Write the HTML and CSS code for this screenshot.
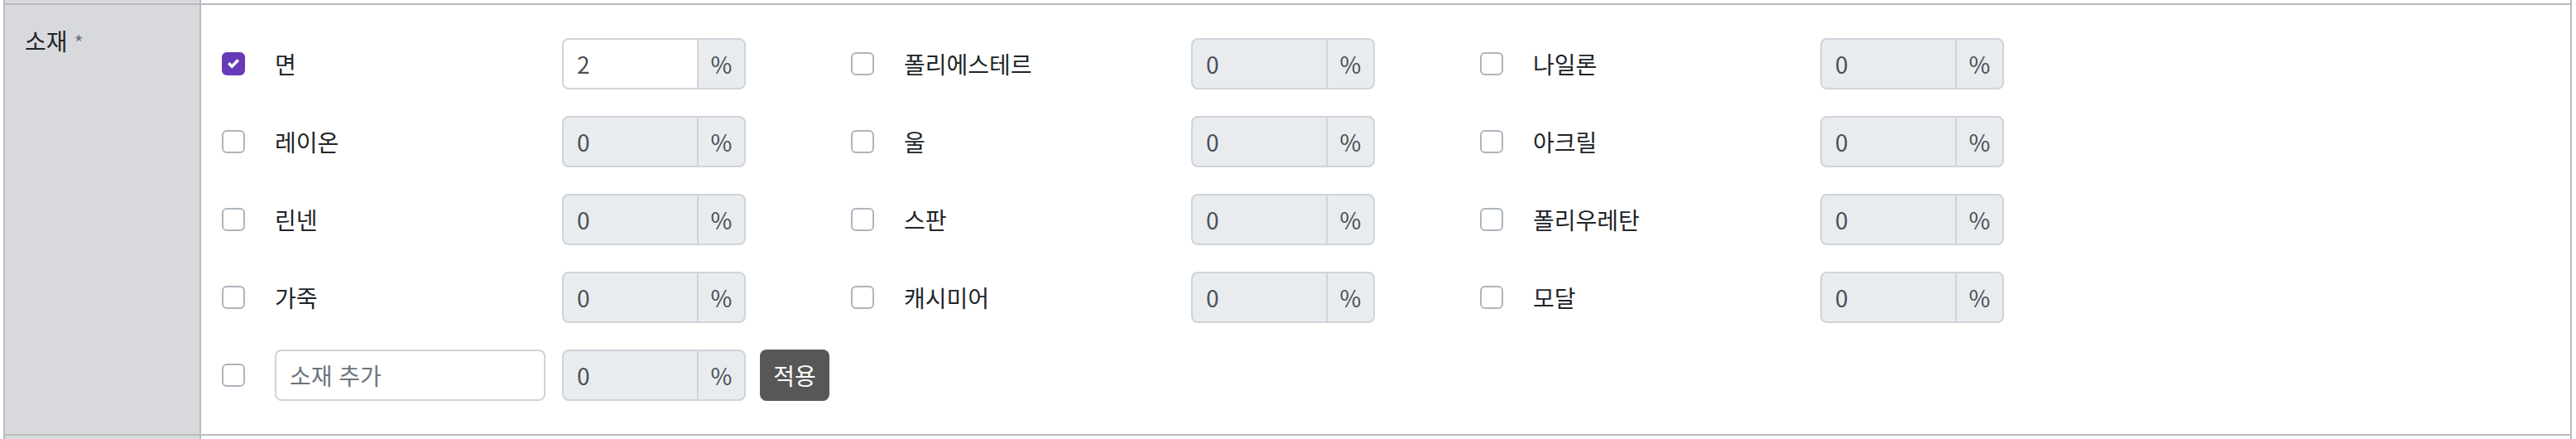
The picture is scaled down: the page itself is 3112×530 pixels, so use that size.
FILE: index.html
```html
<!DOCTYPE html>
<html lang="ko">
<head>
<meta charset="utf-8">
<title>소재</title>
<link rel="stylesheet" href="styles.css">
</head>
<body>
<div class="table">
  <div class="row stub"><div class="th"></div><div class="td"></div></div>
  <div class="row">
    <div class="th">소재 <span class="req">*</span></div>
    <div class="td">
      <div class="materials">
        <div class="item">
          <span class="box on"><svg viewBox="0 0 8 8" width="14" height="14"><path fill="#fff" d="M6.564.75l-3.59 3.612-1.538-1.55L0 4.26 2.974 7.25 8 2.193z"/></svg></span>
          <span class="name">면</span>
          <div class="ig"><input class="num" type="text" value="2"><span class="addon">%</span></div>
        </div>
        <div class="item">
          <span class="box"></span>
          <span class="name">폴리에스테르</span>
          <div class="ig"><input class="num" type="text" value="0" disabled><span class="addon">%</span></div>
        </div>
        <div class="item">
          <span class="box"></span>
          <span class="name">나일론</span>
          <div class="ig"><input class="num" type="text" value="0" disabled><span class="addon">%</span></div>
        </div>
        <div class="item">
          <span class="box"></span>
          <span class="name">레이온</span>
          <div class="ig"><input class="num" type="text" value="0" disabled><span class="addon">%</span></div>
        </div>
        <div class="item">
          <span class="box"></span>
          <span class="name">울</span>
          <div class="ig"><input class="num" type="text" value="0" disabled><span class="addon">%</span></div>
        </div>
        <div class="item">
          <span class="box"></span>
          <span class="name">아크릴</span>
          <div class="ig"><input class="num" type="text" value="0" disabled><span class="addon">%</span></div>
        </div>
        <div class="item">
          <span class="box"></span>
          <span class="name">린넨</span>
          <div class="ig"><input class="num" type="text" value="0" disabled><span class="addon">%</span></div>
        </div>
        <div class="item">
          <span class="box"></span>
          <span class="name">스판</span>
          <div class="ig"><input class="num" type="text" value="0" disabled><span class="addon">%</span></div>
        </div>
        <div class="item">
          <span class="box"></span>
          <span class="name">폴리우레탄</span>
          <div class="ig"><input class="num" type="text" value="0" disabled><span class="addon">%</span></div>
        </div>
        <div class="item">
          <span class="box"></span>
          <span class="name">가죽</span>
          <div class="ig"><input class="num" type="text" value="0" disabled><span class="addon">%</span></div>
        </div>
        <div class="item">
          <span class="box"></span>
          <span class="name">캐시미어</span>
          <div class="ig"><input class="num" type="text" value="0" disabled><span class="addon">%</span></div>
        </div>
        <div class="item">
          <span class="box"></span>
          <span class="name">모달</span>
          <div class="ig"><input class="num" type="text" value="0" disabled><span class="addon">%</span></div>
        </div>
        <div class="item custom">
          <span class="box"></span>
          <span class="name"><input class="text" type="text" placeholder="소재 추가"></span>
          <div class="ig"><input class="num" type="text" value="0" disabled><span class="addon">%</span></div>
          <button class="apply" type="button">적용</button>
        </div>
      </div>
    </div>
  </div>
  <div class="row stub tall"><div class="th"></div><div class="td"></div></div>
</div>
</body>
</html>
```

FILE: styles.css
```css
* { box-sizing: border-box; }

html, body {
  margin: 0;
  padding: 0;
  background: #fff;
}

body {
  font-family: "Noto Sans CJK KR", "Noto Sans", sans-serif;
  font-size: 28px;
  line-height: 1.5;
  color: #212529;
}

.table {
  width: 3103px;
  margin-left: 4px;
  border-left: 2px solid #babbbe;
  border-right: 2px solid #babbbe;
}

.row {
  display: grid;
  grid-template-columns: 237px 1fr;
}

.row + .row {
  border-top: 2px solid #babbbe;
}

.stub { height: 4px; }
.stub.tall { height: 20px; }

.th {
  background: #d8d9dc;
  border-right: 2px solid #babbbe;
  padding: 22px 24px;
  white-space: nowrap;
}

.stub .th { padding: 0; }

.req {
  font-size: 24px;
  color: #6c757d;
}

.td {
  background: #fff;
  padding: 40px 25px;
}

.stub .td { padding: 0; }

.materials {
  display: grid;
  grid-template-columns: repeat(3, 760px);
  grid-auto-rows: 62px;
  row-gap: 32px;
}

.item {
  display: flex;
  align-items: center;
}

.custom {
  grid-column: 1 / -1;
}

.box {
  width: 28px;
  height: 28px;
  flex: none;
  border: 2px solid #adb5bd;
  border-radius: 6px;
  background: #fff;
  margin-right: 36px;
  display: flex;
  align-items: center;
  justify-content: center;
}

.box.on {
  background: #673ab7;
  border-color: #673ab7;
}

.name {
  width: 347px;
  flex: none;
  display: flex;
  align-items: center;
  white-space: nowrap;
}

.ig {
  display: flex;
  width: 222px;
  height: 62px;
  flex: none;
}

.num, .text {
  font: inherit;
  font-size: 28px;
  color: #495057;
  height: 62px;
  border: 2px solid #ced4da;
  padding: 0 16px;
  outline: none;
  margin: 0;
}

.num {
  width: 165px;
  background: #fff;
  border-radius: 8px 0 0 8px;
}

.num:disabled {
  background: #e9ecef;
  color: #495057;
  -webkit-text-fill-color: #495057;
  opacity: 1;
}

.text {
  width: 327px;
  border-radius: 8px;
  background: #fff;
}

.text::placeholder {
  color: #6c757d;
  opacity: 1;
}

.addon {
  width: 59px;
  margin-left: -2px;
  height: 62px;
  border: 2px solid #ced4da;
  border-radius: 0 8px 8px 0;
  background: #e9ecef;
  color: #495057;
  display: flex;
  align-items: center;
  justify-content: center;
}

.apply {
  margin-left: 17px;
  height: 62px;
  width: 84px;
  padding: 0;
  border: none;
  border-radius: 8px;
  background: #575757;
  color: #fff;
  font: inherit;
  font-size: 28px;
}
```
